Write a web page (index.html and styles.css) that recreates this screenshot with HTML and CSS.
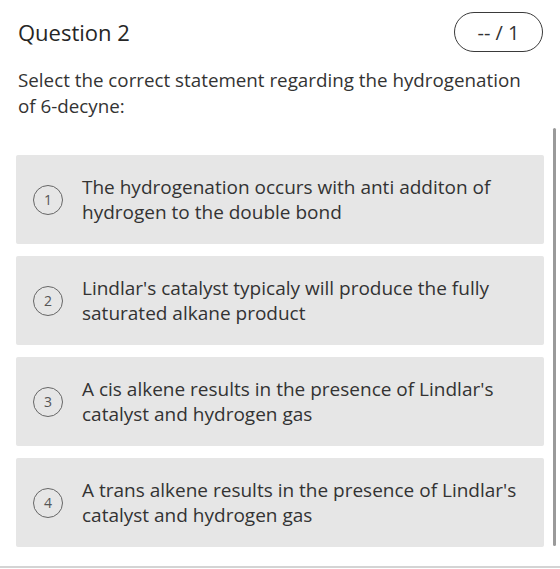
FILE: index.html
```html
<!DOCTYPE html>
<html lang="en">
<head>
<meta charset="utf-8">
<title>Question 2</title>
<link rel="stylesheet" href="styles.css">
</head>
<body>
<div class="screen">
  <main class="question">
    <header class="question-head">
      <h2 class="question-title">Question 2</h2>
      <span class="score-pill">-- / 1</span>
    </header>
    <p class="question-prompt">Select the correct statement regarding the hydrogenation of 6-decyne:</p>
    <ol class="choices">
      <li class="choice"><span class="choice-num">1</span><span class="choice-text">The hydrogenation occurs with anti additon of hydrogen to the double bond</span></li>
      <li class="choice"><span class="choice-num">2</span><span class="choice-text">Lindlar's catalyst typicaly will produce the fully saturated alkane product</span></li>
      <li class="choice"><span class="choice-num">3</span><span class="choice-text">A cis alkene results in the presence of Lindlar's catalyst and hydrogen gas</span></li>
      <li class="choice"><span class="choice-num">4</span><span class="choice-text">A trans alkene results in the presence of Lindlar's catalyst and hydrogen gas</span></li>
    </ol>
  </main>
  <div class="scroll-thumb"></div>
  <div class="bottom-rule"></div>
</div>
</body>
</html>
```
FILE: styles.css
```css
* { box-sizing: border-box; }

html, body {
  margin: 0;
  padding: 0;
  background: #fff;
}

body {
  font-family: "Open Sans", "Noto Sans", sans-serif;
  color: #333;
}

.screen {
  position: relative;
  width: 560px;
  height: 569px;
  overflow: hidden;
}

.question {
  padding: 12px 16px 0 16px;
  width: 560px;
}

.question-head {
  display: flex;
  justify-content: space-between;
  align-items: center;
  height: 40px;
}

.question-title {
  margin: 0 0 0 2px;
  font-size: 22px;
  font-weight: 500;
  line-height: 40px;
  color: #262626;
}

.score-pill {
  display: flex;
  align-items: center;
  justify-content: center;
  width: 89px;
  height: 40px;
  margin-right: 1px;
  border: 1.5px solid #3a3a3a;
  border-radius: 20px;
  font-size: 20px;
  color: #333;
}

.question-prompt {
  margin: 15px 0 0 2px;
  max-width: 512px;
  font-size: 18.8px;
  line-height: 26px;
  color: #333;
}

.choices {
  list-style: none;
  margin: 36px 0 0 0;
  padding: 0;
  width: 528px;
  display: flex;
  flex-direction: column;
  gap: 12px;
}

.choice {
  display: flex;
  align-items: center;
  height: 89px;
  padding: 0 16px 0 17px;
  background: #e6e6e6;
  border-radius: 2px;
}

.choice-num {
  flex: none;
  width: 30px;
  height: 30px;
  border: 1.5px solid #666;
  border-radius: 50%;
  display: flex;
  align-items: center;
  justify-content: center;
  font-size: 14px;
  color: #555;
  margin-right: 19px;
}

.choice-text {
  font-size: 19px;
  line-height: 25px;
  color: #333;
}

/* thin scroll indicator on the right edge */
.scroll-thumb {
  position: absolute;
  left: 553px;
  top: 128px;
  width: 3px;
  height: 418px;
  border-radius: 2px;
  background: #9a9a9a;
}

.bottom-rule {
  position: absolute;
  left: 0;
  right: 0;
  top: 566px;
  height: 2px;
  background: #d4d4d4;
}
```
